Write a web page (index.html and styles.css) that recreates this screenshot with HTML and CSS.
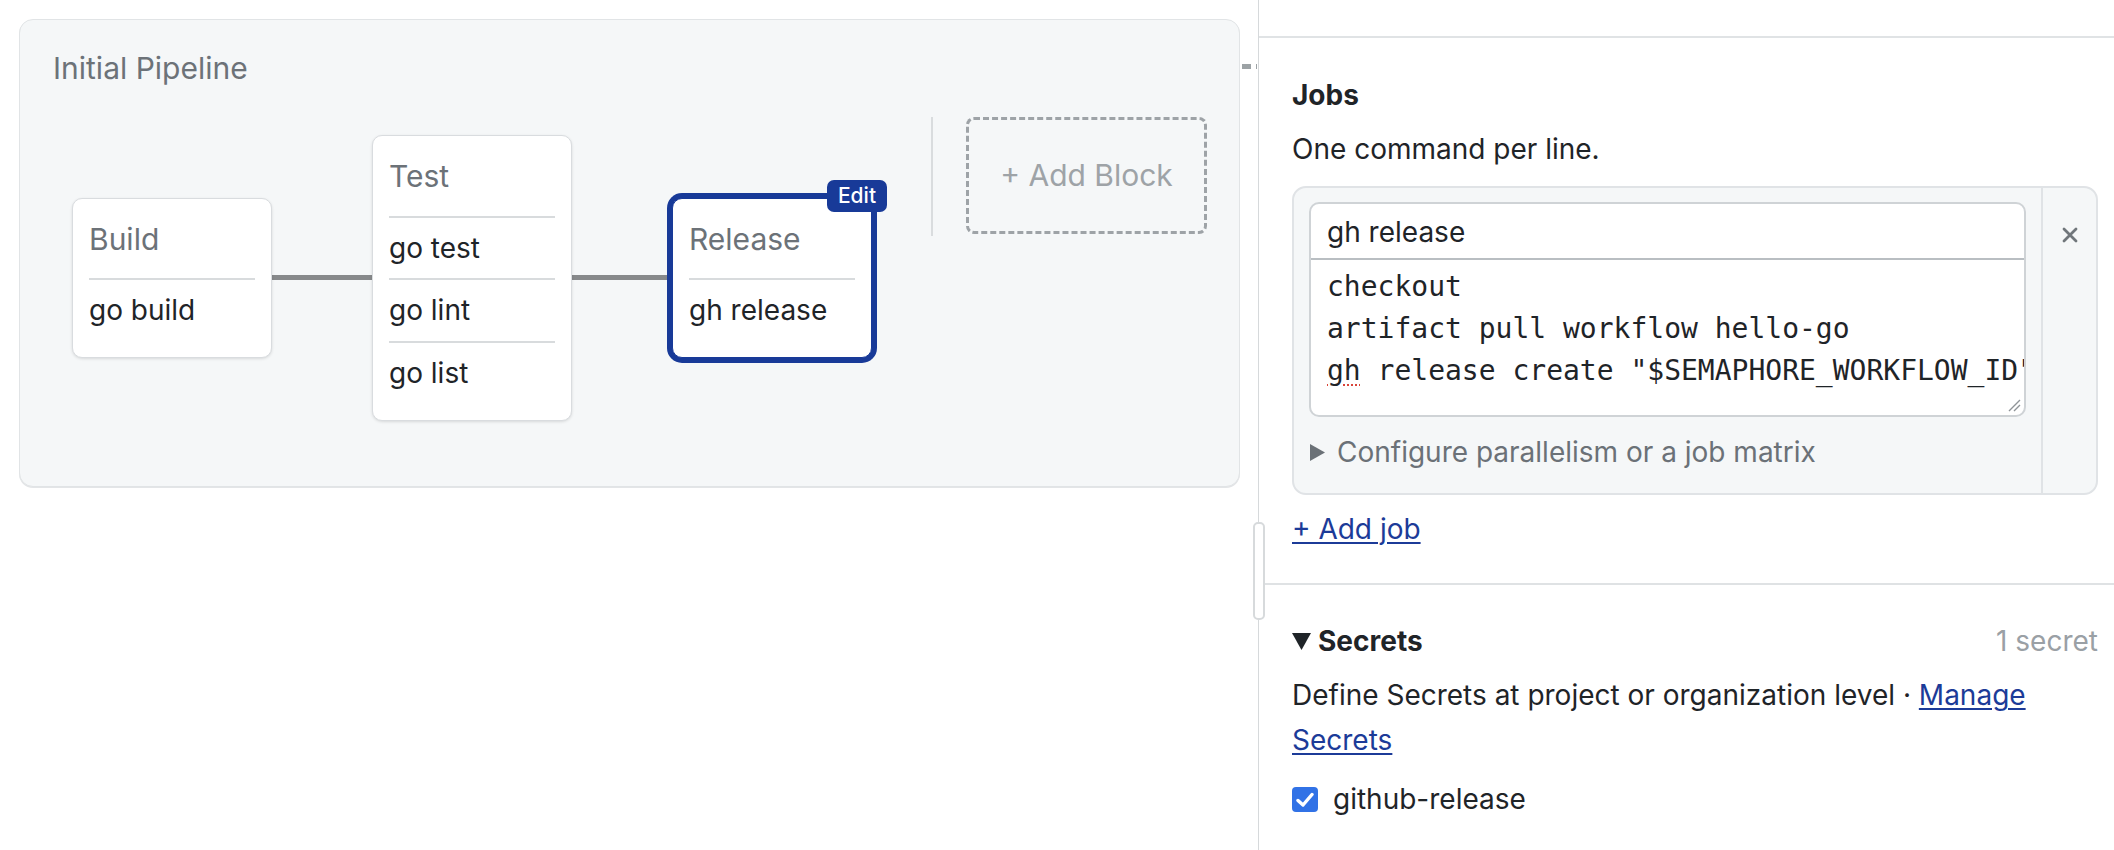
FILE: index.html
```html
<!DOCTYPE html>
<html lang="en">
<head>
<meta charset="utf-8">
<title>Workflow Builder</title>
<link rel="stylesheet" href="styles.css">
</head>
<body>
<div class="app">
  <main class="canvas">
    <section class="pipeline">
      <h2 class="pipeline-title">Initial Pipeline</h2>
      <div class="pipeline-body">
        <div class="stages">
          <div class="block">
            <div class="block-name">Build</div>
            <ul class="block-jobs"><li>go build</li></ul>
          </div>
          <div class="connector"></div>
          <div class="block">
            <div class="block-name">Test</div>
            <ul class="block-jobs"><li>go test</li><li>go lint</li><li>go list</li></ul>
          </div>
          <div class="connector"></div>
          <div class="block block--selected">
            <span class="edit-badge">Edit</span>
            <div class="block-name">Release</div>
            <ul class="block-jobs"><li>gh release</li></ul>
          </div>
        </div>
        <div class="vsep"></div>
        <div class="add-block">+ Add Block</div>
      </div>
      <span class="promo-link"></span>
    </section>
  </main>

  <aside class="panel">
    <div class="panel-head"></div>
    <span class="resize-handle"></span>

    <section class="section">
      <h3 class="section-title">Jobs</h3>
      <p class="hint">One command per line.</p>
      <div class="job-box">
        <div class="job-main">
          <div class="job-fields">
            <div class="job-name">gh release</div>
            <div class="job-cmds">checkout
artifact pull workflow hello-go
<span class="misspelled">gh</span> release create "$SEMAPHORE_WORKFLOW_ID"<svg class="grip" width="14" height="14" viewBox="0 0 14 14"><path d="M13 2 L2 13 M13 7 L7 13" stroke="#8f9498" stroke-width="1.4" fill="none"/></svg></div>
          </div>
          <div class="configure">
            <svg class="tri-right" width="15" height="17" viewBox="0 0 15 17"><path d="M0 0 L15 8.5 L0 17 Z" fill="#6b7177"/></svg>
            <span>Configure parallelism or a job matrix</span>
          </div>
        </div>
        <div class="job-aside">
          <svg width="16" height="16" viewBox="0 0 16 16"><path d="M2 2 L14 14 M14 2 L2 14" stroke="#70767b" stroke-width="2.8" stroke-linecap="round"/></svg>
        </div>
      </div>
      <a class="link add-job" href="#">+ Add job</a>
    </section>

    <section class="section section--last">
      <div class="secrets-head">
        <div class="secrets-title">
          <svg class="tri-down" width="19" height="17" viewBox="0 0 19 17"><path d="M0 0 L19 0 L9.5 17 Z" fill="#1f2428"/></svg>
          <span>Secrets</span>
        </div>
        <span class="count">1 secret</span>
      </div>
      <p class="secrets-desc">Define Secrets at project or organization level · <a class="link" href="#">Manage Secrets</a></p>
      <label class="secret-item">
        <span class="checkbox"><svg width="18" height="16" viewBox="0 0 18 16"><path d="M2 8.5 L7 13 L16 2.5" stroke="#fff" stroke-width="3.4" fill="none" stroke-linecap="round" stroke-linejoin="round"/></svg></span>
        <span>github-release</span>
      </label>
    </section>
  </aside>
</div>
</body>
</html>
```

FILE: styles.css
```css
* { box-sizing: border-box; }

html, body {
  margin: 0;
  padding: 0;
}

body {
  width: 2114px;
  height: 850px;
  overflow: hidden;
  background: #ffffff;
  color: #1f2428;
  font-family: Inter, "Noto Sans", sans-serif;
  font-size: 28px;
  line-height: 44.8px;
}

.app {
  display: flex;
  height: 850px;
}

/* ---------- Canvas ---------- */
.canvas {
  flex: 0 0 1258px;
  padding: 19px 18px 0 19px;
}

.pipeline {
  position: relative;
  background: #f5f7f8;
  border: 1px solid #e1e4e6;
  border-radius: 14px;
  box-shadow: 0 1px 0 #e3e5e7;
  padding: 26px 0 47px 33px;
}

.pipeline-title {
  margin: 0;
  font-size: 30px;
  font-weight: 400;
  line-height: 44.8px;
  color: #6c7278;
}

.pipeline-body {
  display: flex;
  align-items: flex-start;
  margin-top: 26px;
  padding-left: 19px;
}

.stages {
  display: flex;
  align-items: center;
  padding: 18px 0;
}

.block {
  position: relative;
  width: 200px;
  background: #ffffff;
  border: 1px solid #d9dcdf;
  border-radius: 10px;
  box-shadow: 0 1px 3px rgba(0, 0, 0, 0.12);
  padding: 18px 16px 16px;
}

.block-name {
  color: #6c7278;
  font-size: 30px;
  padding-bottom: 17px;
}

.block-jobs {
  list-style: none;
  margin: 0;
  padding: 0;
}

.block-jobs li {
  border-top: 2px solid #d8dbdd;
  padding: 8px 0;
  color: #1f2428;
}

.connector {
  width: 100px;
  height: 5px;
  background: #87898b;
}

.block--selected {
  border-color: #183a98;
  box-shadow: 0 0 0 5px #183a98;
}

.edit-badge {
  position: absolute;
  top: -19px;
  right: -16px;
  width: 60px;
  height: 32px;
  border-radius: 7px;
  background: #183a98;
  color: #ffffff;
  font-size: 21px;
  font-weight: 500;
  line-height: 32px;
  text-align: center;
}

.vsep {
  width: 2px;
  height: 119px;
  margin-left: 59px;
  background: #d9dcde;
}

.add-block {
  width: 241px;
  height: 117px;
  margin-left: 33px;
  border: 3px dashed #9ea3a7;
  border-radius: 8px;
  display: flex;
  align-items: center;
  justify-content: center;
  color: #9ea3a7;
  font-size: 30px;
}

.promo-link {
  position: absolute;
  top: 44px;
  right: -18px;
  width: 15px;
  height: 5px;
  background: repeating-linear-gradient(to right, #9ca2a5 0 9px, transparent 9px 14px);
}

/* ---------- Side panel ---------- */
.panel {
  flex: 1 1 0;
  min-width: 0;
  position: relative;
  border-left: 1px solid #d6d9db;
  background: #ffffff;
}

.panel-head {
  height: 38px;
  border-bottom: 2px solid #e0e3e5;
}

.resize-handle {
  position: absolute;
  left: -6px;
  top: 522px;
  width: 12px;
  height: 98px;
  background: #ffffff;
  border: 2px solid #d7dadc;
  border-radius: 5px;
  z-index: 2;
}

.section {
  padding: 35px 16px 31px 33px;
  border-bottom: 2px solid #dfe2e4;
}

.section--last {
  border-bottom: 0;
  padding-top: 34px;
}

.section-title {
  margin: 0;
  font-size: 28px;
  font-weight: 700;
  line-height: 44.8px;
}

.hint {
  margin: 9px 0 0;
}

.job-box {
  display: flex;
  margin-top: 14px;
  border: 2px solid #e0e3e6;
  border-radius: 14px;
  background: #f5f7f8;
}

.job-main {
  flex: 1 1 0;
  min-width: 0;
  padding: 14px 15px 18px 15px;
}

.job-aside {
  flex: 0 0 55px;
  border-left: 2px solid #e0e3e6;
  display: flex;
  justify-content: center;
  align-items: flex-start;
  padding-top: 39px;
}

.job-fields {
  border: 2px solid #cfd3d6;
  border-radius: 10px;
  background: #ffffff;
  overflow: hidden;
}

.job-name {
  padding: 6px 16px 4px;
  border-bottom: 2px solid #b9bec2;
}

.job-cmds {
  position: relative;
  height: 155px;
  padding: 6px 16px 0;
  font-family: "DejaVu Sans Mono", "Liberation Mono", monospace;
  font-size: 28px;
  line-height: 42px;
  white-space: pre;
  overflow: hidden;
  color: #1f2428;
}

.misspelled {
  text-decoration: underline dotted #d9443a;
  text-decoration-thickness: 2px;
  text-underline-offset: 4px;
}

.grip {
  position: absolute;
  right: 3px;
  bottom: 3px;
}

.configure {
  display: flex;
  align-items: center;
  margin-top: 13px;
  color: #6b7177;
}

.tri-right {
  margin: 0 12px 0 1px;
}

.link {
  color: #1c3b98;
  text-decoration: underline;
  text-decoration-thickness: 2px;
  text-underline-offset: 3px;
}

.add-job {
  display: inline-block;
  margin-top: 12px;
}

.secrets-head {
  display: flex;
  justify-content: space-between;
  align-items: center;
}

.secrets-title {
  display: flex;
  align-items: center;
  font-weight: 700;
}

.tri-down {
  margin-right: 7px;
}

.count {
  color: #9aa0a5;
}

.secrets-desc {
  margin: 9px 0 0;
}

.secret-item {
  display: flex;
  align-items: center;
  margin-top: 15px;
}

.checkbox {
  width: 26px;
  height: 25px;
  margin-right: 15px;
  border-radius: 4px;
  background: #3172e6;
  display: flex;
  align-items: center;
  justify-content: center;
}
```
